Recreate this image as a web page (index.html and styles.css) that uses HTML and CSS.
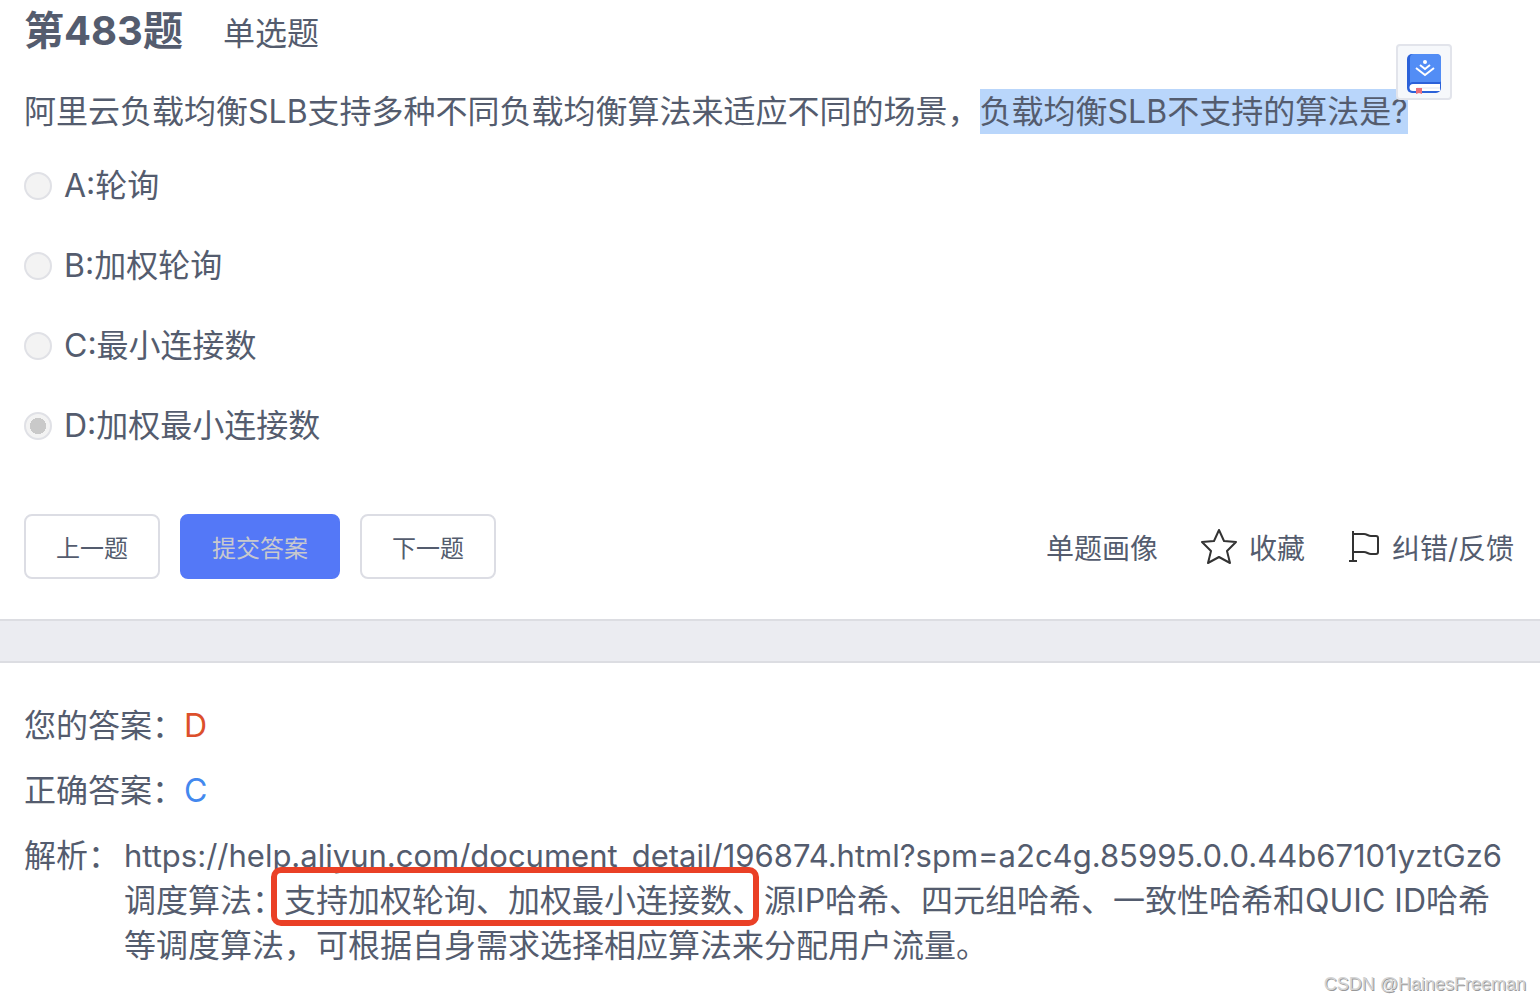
FILE: index.html
```html
<!DOCTYPE html>
<html lang="zh-CN">
<head>
    <meta charset="UTF-8">
    <meta name="viewport" content="width=device-width, initial-scale=1.0">
    <title>第483题</title>
    <link rel="stylesheet" href="styles.css">
</head>
<body>
    <main>
        <form class="question" action="">
            <div class="head">
                <h1>第483题</h1>
                <span>单选题</span>
            </div>
            <p class="text">阿里云负载均衡SLB支持多种不同负载均衡算法来适应不同的场景，<span class="picked">负载均衡SLB不支持的算法是?<button type="button" class="dict" aria-label="词典">
                <svg width="34" height="40" viewBox="0 0 34 40">
                    <rect x="0" y="0" width="34" height="39" rx="5" fill="#2b61d9"/>
                    <path d="M3 27V4a4 4 0 0 1 4-4h23a4 4 0 0 1 4 4v23q0 1-1 1H6q-2 0-3 1z" fill="#528df5"/>
                    <path d="M33 30H6a3 3 0 0 0 0 7h27z" fill="#fff"/>
                    <path d="M10 34h23" stroke="#dfe5f2" stroke-width="1"/>
                    <path d="M9 34h6v6l-3-1-3 1z" fill="#eb6d7a"/>
                    <circle cx="18" cy="8" r="2" fill="#fff"/>
                    <path d="M13 11l5 4 5-4M9 14l9 7 9-7" fill="none" stroke="#fff" stroke-width="2"/>
                </svg>
            </button></span></p>
            <div class="options">
                <label><input type="radio" name="answer" disabled>A:轮询</label>
                <label><input type="radio" name="answer" disabled>B:加权轮询</label>
                <label><input type="radio" name="answer" disabled>C:最小连接数</label>
                <label><input type="radio" name="answer" checked disabled>D:加权最小连接数</label>
            </div>
            <div class="bar">
                <div class="btns">
                    <button type="button" class="btn">上一题</button>
                    <button type="submit" class="btn btn-primary" disabled>提交答案</button>
                    <button type="button" class="btn">下一题</button>
                </div>
                <div class="tools">
                    <a href="#">单题画像</a>
                    <a href="#">
                        <svg width="36" height="36" viewBox="0 0 36 36" fill="none" stroke="#333" stroke-width="2" stroke-linejoin="round">
                            <path d="M18 1l5 11 12 1-9 9 3 12-11-6-11 6 3-12-9-9 12-1z"/>
                        </svg>
                        收藏
                    </a>
                    <a href="#">
                        <svg width="32" height="36" viewBox="0 0 32 36" fill="none" stroke="#333" stroke-width="2" stroke-linejoin="round">
                            <path d="M5 2v30M1 32h8M5 5h11c3 0 4 2 7 2h5q2 0 2 2v14q0 2-2 2h-5c-3 0-4-2-7-2H5"/>
                        </svg>
                        纠错/反馈
                    </a>
                </div>
            </div>
        </form>
        <div class="gap"></div>
        <section class="result">
            <div class="row"><span>您的答案：</span><span class="wrong">D</span></div>
            <div class="row"><span>正确答案：</span><span class="right">C</span></div>
            <div class="row">
                <span class="name">解析：</span>
                <p><span class="url">https://help.aliyun.com/document_detail/196874.html?spm=a2c4g.85995.0.0.44b67101yztGz6</span><br>调度算法：<span class="boxed">支持加权轮询、加权最小连接数、</span>源IP哈希、四元组哈希、一致性哈希和QUIC ID哈希等调度算法，可根据自身需求选择相应算法来分配用户流量。</p>
            </div>
        </section>
    </main>
    <footer>CSDN @HainesFreeman</footer>
</body>
</html>
```
FILE: styles.css
```css
*{
    box-sizing: border-box;
}
body{
    margin: 0;
    background-color: #fff;
    color: #545c6e;
    font-family: Inter, "Noto Sans CJK SC", sans-serif;
    font-size: 32px;
    line-height: 45px;
}
h1, p{
    margin: 0;
}
button{
    font-family: inherit;
    cursor: pointer;
}
.question{
    padding: 3px 24px 40px;
}
.head{
    display: flex;
    align-items: baseline;
    gap: 40px;
    margin-bottom: 30px;
}
.head h1{
    font-size: 40px;
    line-height: 56px;
    font-weight: 700;
}
.picked{
    position: relative;
    display: inline-block;
    background-color: #b9d6fb;
}
/* dictionary popup shown over the end of the selection */
.dict{
    position: absolute;
    top: -45px;
    right: -44px;
    width: 56px;
    height: 56px;
    display: flex;
    align-items: center;
    justify-content: center;
    padding: 4px 0 0;
    border: 2px solid #e2e4eb;
    border-radius: 4px;
    background-color: #f6f8fb;
}
.options{
    display: flex;
    flex-direction: column;
    align-items: flex-start;
    gap: 35px;
    margin: 29px 0 66px;
}
.options label{
    display: flex;
    align-items: center;
    gap: 12px;
}
.options input{
    appearance: none;
    width: 28px;
    height: 28px;
    margin: 0;
    border: 2px solid #e0e1e6;
    border-radius: 50%;
    background-color: #f3f3f3;
}
.options input:checked{
    background-image: radial-gradient(circle, #c9c9c9 8px, transparent 8px);
}
.bar{
    display: flex;
    align-items: center;
    justify-content: space-between;
}
.btns{
    display: flex;
    gap: 20px;
}
.btn{
    height: 65px;
    padding: 0 30px;
    border: 2px solid #dcdde4;
    border-radius: 8px;
    background-color: #fff;
    color: #545c6e;
    font-size: 24px;
}
.btn-primary{
    border-color: #5478f7;
    background-color: #5478f7;
    color: #c8c9cd;
}
.tools{
    display: flex;
    gap: 43px;
    padding-right: 2px;
    font-size: 28px;
    line-height: normal;
}
.tools a{
    display: flex;
    align-items: center;
    gap: 12px;
    color: inherit;
    text-decoration: none;
}
.gap{
    height: 44px;
    border: 2px solid #dcdde2;
    border-width: 2px 0;
    background-color: #ebecf1;
}
.result{
    display: flex;
    flex-direction: column;
    gap: 20px;
    padding: 40px 32px 0 24px;
}
.row{
    display: flex;
}
.name{
    flex: none;
    width: 100px;
}
.wrong{
    color: #dc4f2b;
}
.right{
    color: #4388ee;
}
.url{
    font-size: 31px;
}
.boxed{
    position: relative;
    display: inline-block;
}
.boxed::after{
    content: "";
    position: absolute;
    top: -11px;
    right: 5px;
    bottom: -3px;
    left: -13px;
    border: 6px solid #ea4026;
    border-radius: 10px;
}
footer{
    padding: 4px 14px;
    color: #d4d4d4;
    font-family: "Liberation Sans", sans-serif;
    font-size: 18px;
    line-height: 24px;
    text-align: right;
    text-shadow: 1px 1px 0 #999;
}
```
